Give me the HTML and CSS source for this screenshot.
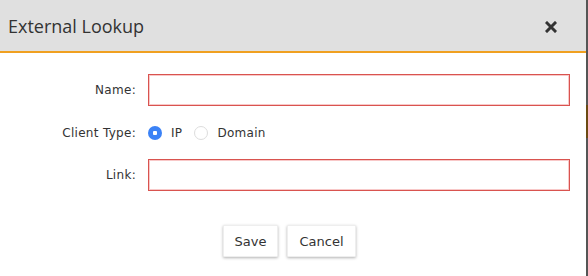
FILE: index.html
```html
<!doctype html>
<html>
<head>
 <title>External Lookup</title>
 <meta name=viewport content="width=device-width, initial-scale=1">
 <link rel="stylesheet" href="styles.css">
</head>
<body>
<div class=modal>
 <div class=modal-header>
  <span class=modal-title>External Lookup</span>
  <span class=close>
   <svg width=12 height=12 viewBox="0 0 12 12"><path d="M2 2 L10 10 M10 2 L2 10" stroke="#333" stroke-width="3" stroke-linecap="square"/></svg>
  </span>
 </div>
 <div class=modal-body>
  <div class=row>
   <label class=lbl>Name:</label>
   <input class=field type=text>
  </div>
  <div class="row radios">
   <label class=lbl>Client Type:</label>
   <span class="radio on"></span><span class=opt>IP</span>
   <span class=radio></span><span class=opt>Domain</span>
  </div>
  <div class=row>
   <label class=lbl>Link:</label>
   <input class=field type=text>
  </div>
  <div class=buttons>
   <button class=btn>Save</button>
   <button class=btn>Cancel</button>
  </div>
 </div>
</div>
</body>
</html>
```
FILE: styles.css
```css
body {
  margin:0;
  background: linear-gradient(#555 0, #555 105px, #6b4a12 105px, #6b4a12 138px, #555 138px);
  font-family: "DejaVu Sans", Verdana, sans-serif;
  color:#333;
}
.modal {
  width:586px;
  height:276px;
  background:white;
}
.modal-header {
  height:51px;
  background:#e0e0e0;
  border-bottom:2px solid #f0a020;
  display:flex;
  align-items:center;
  justify-content:space-between;
  padding:0 29px 0 8px;
}
.modal-title {
  font-family: "Open Sans", sans-serif;
  font-size:18px;
  color:#333;
}
.close {display:flex; padding-top:2px;}
.modal-body {padding-top:21px;}
.row {
  display:flex;
  align-items:center;
  height:32px;
}
.radios {height:20px; margin:17px 0 16px;}
.lbl {
  width:136px;
  margin-right:12px;
  text-align:right;
  font-size:12px;
  letter-spacing:0.3px;
}
.field {
  width:422px;
  height:32px;
  box-sizing:border-box;
  margin:0;
  border:1px solid #d9534f;
  box-shadow: inset 0 0 0 1px #f8c8c8;
  outline:none;
}
.radio {
  width:14px;
  height:14px;
  box-sizing:border-box;
  border-radius:50%;
  border:1px solid #ddd;
  background:white;
}
.radio.on {
  border:none;
  background: radial-gradient(circle, white 0, white 2px, #3b82f6 2.5px);
}
.opt {font-size:12px; margin:0 12px 0 9px; letter-spacing:0.3px;}
.buttons {
  display:flex;
  gap:9px;
  margin:34px 0 0 223px;
}
.btn {
  height:32px;
  padding:0 10px;
  border:1px solid #eee;
  border-radius:1px;
  background:white;
  font-family: "DejaVu Sans", sans-serif;
  font-size:13px;
  color:#333;
  box-shadow: 0 1px 3px rgba(0,0,0,0.3);
}
.btn:first-child {width:55px;}
.btn:last-child {width:69px;}
```
